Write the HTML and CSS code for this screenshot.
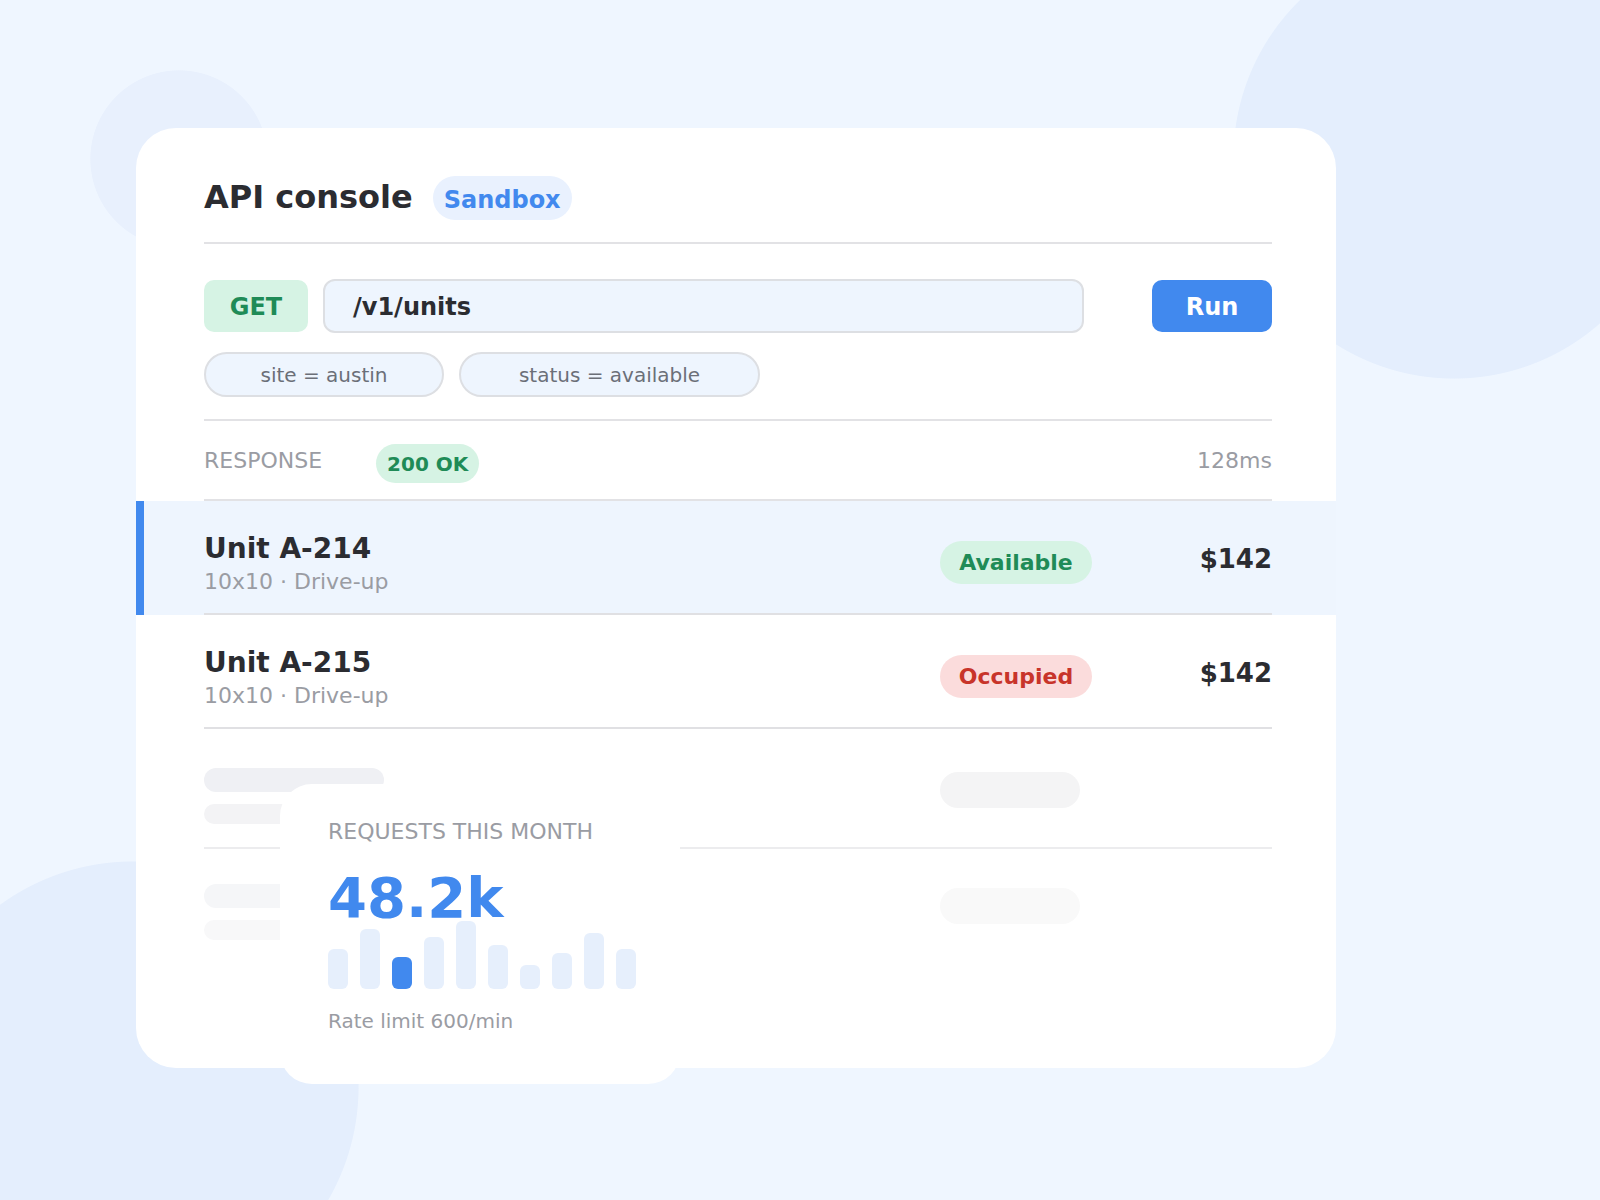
FILE: index.html
```html
<!DOCTYPE html>
<html lang="en">
<head>
<meta charset="utf-8">
<title>API console</title>
<link rel="stylesheet" href="styles.css">
</head>
<body>
<main class="card">
  <header class="head">
    <h1 class="title">API console</h1>
    <span class="tag">Sandbox</span>
  </header>

  <section class="request">
    <div class="req-row">
      <span class="method">GET</span>
      <div class="url">/v1/units</div>
      <button class="run">Run</button>
    </div>
    <div class="chips">
      <span class="chip chip-site">site = austin</span>
      <span class="chip chip-status">status = available</span>
    </div>
  </section>

  <div class="resp-head">
    <span class="resp-label">RESPONSE</span>
    <span class="ok">200 OK</span>
    <span class="ms">128ms</span>
  </div>

  <div class="row active">
    <div class="row-inner">
      <div class="unit">
        <div class="unit-name">Unit A-214</div>
        <div class="unit-meta">10x10 · Drive-up</div>
      </div>
      <span class="status avail">Available</span>
      <span class="price">$142</span>
    </div>
  </div>
  <div class="row">
    <div class="row-inner">
      <div class="unit">
        <div class="unit-name">Unit A-215</div>
        <div class="unit-meta">10x10 · Drive-up</div>
      </div>
      <span class="status occ">Occupied</span>
      <span class="price">$142</span>
    </div>
  </div>

  <div class="skel skel-a">
    <div class="skel-lines">
      <span class="sk sk1"></span>
      <span class="sk sk2"></span>
    </div>
    <span class="sk-pill"></span>
  </div>
  <div class="skel skel-b">
    <div class="skel-lines">
      <span class="sk sk1"></span>
      <span class="sk sk2"></span>
    </div>
    <span class="sk-pill"></span>
  </div>

  <aside class="stats">
    <div class="stats-label">REQUESTS THIS MONTH</div>
    <div class="stats-value">48.2k</div>
    <div class="bars">
      <span class="bar" style="height:40px"></span>
      <span class="bar" style="height:60px"></span>
      <span class="bar on" style="height:32px"></span>
      <span class="bar" style="height:52px"></span>
      <span class="bar" style="height:68px"></span>
      <span class="bar" style="height:44px"></span>
      <span class="bar" style="height:24px"></span>
      <span class="bar" style="height:36px"></span>
      <span class="bar" style="height:56px"></span>
      <span class="bar" style="height:40px"></span>
    </div>
    <div class="stats-foot">Rate limit 600/min</div>
  </aside>
</main>
</body>
</html>
```

FILE: styles.css
```css
* { box-sizing: border-box; }

html, body { margin: 0; }

body {
  width: 1600px;
  height: 1200px;
  overflow: hidden;
  padding: 128px 0 0 136px;
  font-family: "DejaVu Sans", "Noto Sans", sans-serif;
  color: #2b2c31;
  background-color: #eff6ff;
  background-image:
    radial-gradient(221px circle at 1454px 158px, #e4eefd 99.6%, rgba(228,238,253,0) 100%),
    radial-gradient(89px circle at 179px 159px, #e8f0fd 99.2%, rgba(232,240,253,0) 100%),
    radial-gradient(226px circle at 133px 1087px, #e4eefd 99.6%, rgba(228,238,253,0) 100%);
  background-repeat: no-repeat;
}

.card {
  position: relative;
  width: 1200px;
  height: 940px;
  background: #ffffff;
  border-radius: 40px;
  padding: 48px 64px 0 68px;
}

/* header */
.head {
  display: flex;
  align-items: center;
  height: 68px;
  padding-bottom: 24px;
  border-bottom: 2px solid #e2e2e5;
}

.title {
  margin: 0;
  font-size: 32px;
  font-weight: 700;
  line-height: 38px;
}

.tag {
  margin-left: 20px;
  margin-top: 2px;
  height: 44px;
  line-height: 48px;
  padding: 0 11px;
  border-radius: 22px;
  background: #e9f1fe;
  color: #4289ee;
  font-size: 24px;
  font-weight: 700;
}

/* request */
.request {
  padding: 35px 0 22px;
  border-bottom: 2px solid #e2e2e5;
}

.req-row {
  display: flex;
  align-items: center;
  height: 54px;
}

.method {
  width: 104px;
  height: 52px;
  border-radius: 10px;
  background: #d6f3e4;
  color: #1f8b57;
  font-size: 24px;
  font-weight: 700;
  display: flex;
  align-items: center;
  justify-content: center;
  padding-top: 2px;
  margin-right: 15px;
}

.url {
  flex: 1;
  height: 54px;
  border: 2px solid #dddfe3;
  border-radius: 12px;
  background: #eef5fe;
  padding: 2px 0 0 28px;
  display: flex;
  align-items: center;
  font-size: 24px;
  font-weight: 700;
  color: #2b2c31;
}

.run {
  margin-left: 68px;
  width: 120px;
  height: 52px;
  border: 0;
  border-radius: 10px;
  background: #4189ee;
  color: #ffffff;
  font-family: inherit;
  font-size: 24px;
  font-weight: 700;
  padding: 2px 0 0;
}

.chips {
  display: flex;
  gap: 15px;
  margin-top: 19px;
}

.chip {
  height: 45px;
  border: 2px solid #dddfe3;
  border-radius: 23px;
  background: #eef5fe;
  display: flex;
  align-items: center;
  justify-content: center;
  font-size: 20px;
  color: #6b6f78;
}

.chip-site { width: 240px; }
.chip-status { width: 301px; }

/* response head */
.resp-head {
  display: flex;
  align-items: center;
  height: 80px;
  border-bottom: 2px solid #e2e2e5;
}

.resp-label {
  font-size: 22px;
  color: #9a9ca3;
}

.ok {
  margin-left: 54px;
  margin-top: 7px;
  height: 39px;
  line-height: 40px;
  padding: 0 11px;
  border-radius: 20px;
  background: #d6f3e4;
  color: #1f8b57;
  font-size: 20px;
  font-weight: 700;
}

.ms {
  margin-left: auto;
  font-size: 22px;
  color: #9a9ca3;
}

/* rows */
.row {
  margin: 0 -64px 0 -68px;
  padding: 0 64px 0 68px;
}

.row.active {
  background: #eef5fe;
  box-shadow: inset 8px 0 0 #4189ee;
}

.row-inner {
  display: grid;
  grid-template-columns: 1fr 152px 180px;
  align-items: center;
  height: 114px;
  border-bottom: 2px solid #e0e0e3;
}

.unit { margin-top: 12px; }

.unit-name {
  font-size: 28px;
  font-weight: 700;
  line-height: 34px;
}

.unit-meta {
  margin-top: 3px;
  font-size: 22px;
  line-height: 26px;
  color: #9a9ca3;
}

.status {
  margin-top: 10px;
  height: 43px;
  border-radius: 22px;
  display: flex;
  align-items: center;
  justify-content: center;
  font-size: 22px;
  font-weight: 700;
}

.status.avail { background: #d6f3e4; color: #1f8b57; }
.status.occ { background: #fbdcdc; color: #c8342a; }

.price {
  margin-top: 4px;
  text-align: right;
  font-size: 26px;
  font-weight: 700;
  line-height: 32px;
}

/* skeleton rows */
.skel {
  display: grid;
  grid-template-columns: 1fr 152px 180px;
  align-items: start;
  height: 120px;
}

.skel-a {
  padding-top: 39px;
  border-bottom: 2px solid #ececee;
}

.skel-b { padding-top: 35px; }

.skel-lines {
  display: flex;
  flex-direction: column;
  gap: 12px;
}

.sk { display: block; border-radius: 12px; }
.sk1 { width: 180px; height: 24px; }
.sk2 { width: 140px; height: 20px; border-radius: 10px; }

.skel-a .sk1 { background: #eff0f4; }
.skel-a .sk2 { background: #f3f3f5; }
.skel-b .sk1 { background: #f5f6f8; }
.skel-b .sk2 { background: #f8f8f9; }

.sk-pill {
  display: block;
  width: 140px;
  height: 36px;
  margin-top: 4px;
  border-radius: 18px;
}

.skel-a .sk-pill { background: #f4f4f5; }
.skel-b .sk-pill { background: #f9f9f9; }

/* floating stats card */
.stats {
  position: absolute;
  left: 144px;
  top: 656px;
  width: 400px;
  height: 300px;
  background: #ffffff;
  border-radius: 32px;
  padding: 35px 0 0 48px;
}

.stats-label {
  font-size: 22px;
  line-height: 26px;
  color: #9a9ca3;
}

.stats-value {
  margin-top: 30px;
  font-size: 56px;
  font-weight: 700;
  line-height: 46px;
  color: #4189ee;
}

.bars {
  display: flex;
  align-items: flex-end;
  gap: 12px;
  height: 68px;
}

.bar {
  display: block;
  flex: none;
  width: 20px;
  border-radius: 6px;
  background: #e6effc;
}

.bar.on { background: #4189ee; }

.stats-foot {
  margin-top: 20px;
  font-size: 20px;
  line-height: 24px;
  color: #9a9ca3;
}
```
